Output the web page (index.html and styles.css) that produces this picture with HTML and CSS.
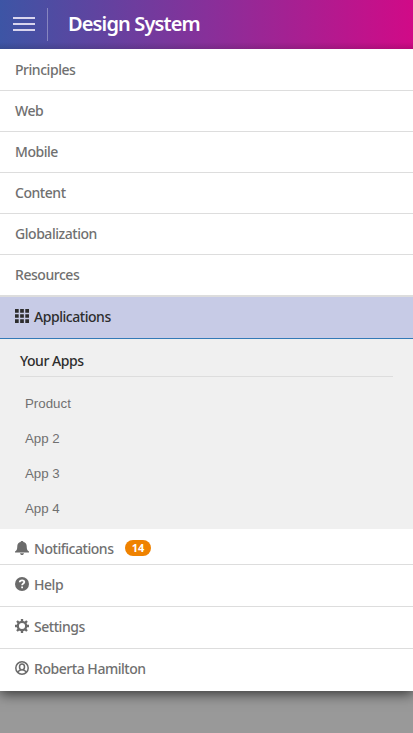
FILE: index.html
```html
<!DOCTYPE html>
<html lang="en">
<head>
<meta charset="utf-8">
<title>Design System</title>
<link rel="stylesheet" href="styles.css">
</head>
<body>
<header class="topbar">
  <button class="menu-button" aria-label="Menu"><i></i><i></i><i></i></button>
  <h1>Design System</h1>
</header>
<nav class="menu">
  <a class="row">Principles</a>
  <a class="row">Web</a>
  <a class="row">Mobile</a>
  <a class="row">Content</a>
  <a class="row">Globalization</a>
  <a class="row last">Resources</a>
  <a class="row apps">
    <svg class="icon" viewBox="0 0 14 14"><path d="M0 0h3.700v3.700H0zM5.150 0h3.700v3.700h-3.700zM10.300 0H14v3.700h-3.700zM0 5.150h3.700v3.700H0zM5.150 5.150h3.700v3.700h-3.700zM10.300 5.150H14v3.700h-3.700zM0 10.300h3.700V14H0zM5.150 10.300h3.700V14h-3.700zM10.300 10.300H14V14h-3.700z"/></svg>
    <span>Applications</span>
  </a>
  <section class="submenu">
    <h2>Your Apps</h2>
    <a>Product</a>
    <a>App 2</a>
    <a>App 3</a>
    <a>App 4</a>
  </section>
  <a class="row notifications">
    <svg class="icon" viewBox="0 0 14 14"><path d="M7 0c.8 0 1.300.4 1.400 1C10.600 1.500 11.700 3.200 11.700 5.300c0 3.200.7 4.200 2.300 5.300v.9H0v-.9c1.600-1.100 2.300-2.100 2.300-5.300 0-2.100 1.100-3.800 3.300-4.300C5.700.4 6.200 0 7 0zM5 12.200h4c-.2 1.200-.9 1.800-2 1.800s-1.800-.6-2-1.800z"/></svg>
    <span>Notifications</span>
    <b class="badge">14</b>
  </a>
  <a class="row tool">
    <svg class="icon" viewBox="0 0 14 14"><circle cx="7" cy="7" r="7"/><path class="cut" d="M4.700 5.300C4.800 3.800 5.700 3.300 7.100 3.300c1.400 0 2.200.6 2.200 1.700 0 1.600-2.200 1.500-2.200 3.300"/><path class="cut" d="M7.100 9.400v1.900"/></svg>
    <span>Help</span>
  </a>
  <a class="row tool">
    <svg class="icon" viewBox="0 0 14 14"><circle class="line" cx="7" cy="7" r="4.200"/><path class="teeth" d="M7 0v3M7 11v3M0 7h3M11 7h3M2 2l2.100 2.100M9.900 9.900L12 12M2 12l2.100-2.100M9.900 4.100L12 2"/></svg>
    <span>Settings</span>
  </a>
  <a class="row tool user">
    <svg class="icon" viewBox="0 0 14 14"><circle class="thin" cx="7" cy="7" r="6.200"/><ellipse class="thin" cx="7" cy="6" rx="2.500" ry="2.900"/><path class="thin" d="M2.800 11.200c.5-1.300 1.600-1.700 2.900-2.200M11.200 11.200c-.5-1.300-1.600-1.700-2.900-2.200"/></svg>
    <span>Roberta Hamilton</span>
  </a>
</nav>
</body>
</html>
```
FILE: styles.css
```css
* { box-sizing: border-box; }
body {
  margin: 0;
  height: 733px;
  overflow: hidden;
  background: #999;
  color: #707070;
  font: 500 14px/20px "Noto Sans", sans-serif;
  letter-spacing: -0.46px;
}
.topbar {
  display: flex;
  align-items: center;
  height: 49px;
  background: linear-gradient(to bottom, transparent 42px, rgba(0,0,0,.12)), linear-gradient(90deg, #3d55a5, #87309a 50%, #d10a87);
}
.menu-button {
  display: flex;
  flex-direction: column;
  justify-content: center;
  gap: 4px;
  width: 48px;
  height: 33px;
  margin-top: -1px;
  padding: 0 0 0 13px;
  border: 0;
  border-right: 1px solid rgba(255,255,255,.32);
  background: none;
}
.menu-button i { width: 22px; height: 2px; background: #d9d5ee; }
h1 {
  margin: -2px 0 0 20px;
  color: #fff;
  font-size: 20px;
  font-weight: 600;
  line-height: 28px;
  letter-spacing: -0.87px;
}
.menu { height: 642px; background: #fff; box-shadow: 0 3px 12px rgba(0,0,0,.65); clip-path: inset(0 0 -24px 0); }
.row {
  display: flex;
  align-items: center;
  height: 41px;
  padding: 0 15px;
  border-bottom: 1px solid #ddd;
  background: #fff;
}
.row:first-child { height: 42px; }
.row.last { height: 42px; border-bottom-width: 2px; }
.icon { flex: none; width: 14px; height: 14px; margin: -2px 5px 0 0; fill: #6b6b6b; }
.row.apps { height: 42px; padding-bottom: 1px; border-color: #337ab7; background: #c7cbe6; color: #2d2d2d; }
.apps .icon { fill: #2d2d2d; }
.submenu { height: 190px; padding: 12px 20px 0; background: #f0f0f0; }
h2 {
  height: 26px;
  margin: 0 0 9px;
  border-bottom: 1px solid #ddd;
  color: #2d2d2d;
  font-size: 14px;
  font-weight: 500;
  line-height: 20px;
}
.submenu a {
  display: block;
  height: 35px;
  padding-left: 5px;
  font: 13.3px/35px "Liberation Sans", sans-serif;
  letter-spacing: 0;
}
.row.notifications { height: 36px; padding-top: 4px; }
.badge {
  width: 26px;
  height: 16px;
  margin: -2px 0 0 11px;
  border-radius: 8px;
  background: #ef8200;
  color: #fff;
  font-size: 11px;
  font-weight: 700;
  line-height: 16px;
  text-align: center;
  letter-spacing: 0;
}
.notifications span { width: 80px; }
.row.tool { height: 42px; padding-bottom: 2px; }
.row.user { border: 0; }
.cut { fill: none; stroke: #fff; stroke-width: 1.8; }
.line { fill: none; stroke: #6b6b6b; stroke-width: 2.3; }
.teeth { fill: none; stroke: #6b6b6b; stroke-width: 2.3; }
.thin { fill: none; stroke: #6b6b6b; stroke-width: 1.5; }
```
